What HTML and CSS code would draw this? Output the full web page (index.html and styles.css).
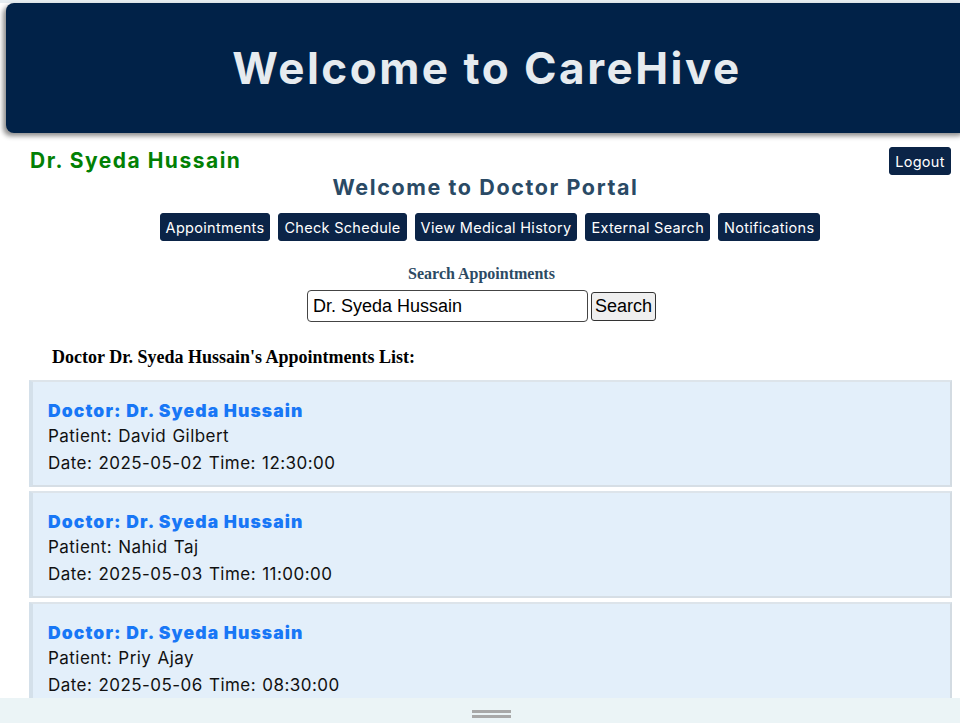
FILE: index.html
```html
<!DOCTYPE html>
<html lang="en">
<head>
<meta charset="utf-8">
<title>CareHive - Doctor Portal</title>
<link rel="stylesheet" href="styles.css">
</head>
<body>
<div class="page">
  <header class="hero">
    <h1 class="hero-title">Welcome to CareHive</h1>
  </header>

  <div class="topline">
    <h2 class="doc-name">Dr. Syeda Hussain</h2>
    <button class="btn logout">Logout</button>
  </div>

  <h2 class="portal-title">Welcome to Doctor Portal</h2>

  <nav class="nav">
    <button class="btn">Appointments</button>
    <button class="btn">Check Schedule</button>
    <button class="btn">View Medical History</button>
    <button class="btn">External Search</button>
    <button class="btn">Notifications</button>
  </nav>

  <section class="search">
    <h3 class="search-title">Search Appointments</h3>
    <form class="search-form">
      <input class="search-input" type="text" value="Dr. Syeda Hussain">
      <button class="search-btn" type="button">Search</button>
    </form>
  </section>

  <h3 class="list-title">Doctor Dr. Syeda Hussain's Appointments List:</h3>

  <div class="list">
    <div class="card">
      <div class="card-doc">Doctor: Dr. Syeda Hussain</div>
      <div class="card-line">Patient: David Gilbert</div>
      <div class="card-line">Date: 2025-05-02 Time: 12:30:00</div>
    </div>
    <div class="card">
      <div class="card-doc">Doctor: Dr. Syeda Hussain</div>
      <div class="card-line">Patient: Nahid Taj</div>
      <div class="card-line">Date: 2025-05-03 Time: 11:00:00</div>
    </div>
    <div class="card">
      <div class="card-doc">Doctor: Dr. Syeda Hussain</div>
      <div class="card-line">Patient: Priy Ajay</div>
      <div class="card-line">Date: 2025-05-06 Time: 08:30:00</div>
    </div>
  </div>
</div>

<div class="dock">
  <span class="handle"></span>
</div>
</body>
</html>
```

FILE: styles.css
```css
html, body {
  margin: 0;
  padding: 0;
  background: #ffffff;
  overflow: hidden;
}

body {
  font-family: "Inter", "Open Sans", sans-serif;
  color: #000;
}

.page {
  border-top: 3px solid #e6edf1;
  width: 980px;
}

.hero {
  margin-left: 6px;
  width: 962px;
  height: 130px;
  background: #012248;
  border-radius: 8px;
  box-shadow: -3px 3px 5px rgba(0, 0, 0, 0.45);
  display: flex;
  align-items: center;
  justify-content: center;
}

.hero-title {
  margin: 0;
  color: #e6ebef;
  font-family: "Inter", sans-serif;
  font-weight: 700;
  font-size: 44px;
  letter-spacing: 2.5px;
}

.topline {
  display: flex;
  justify-content: space-between;
  align-items: flex-start;
  padding: 14px 0 0 30px;
  width: 921px;
  height: 26px;
}

.doc-name {
  margin: 2px 0 0 0;
  color: #028004;
  font-size: 21px;
  font-weight: 700;
  line-height: 24px;
  letter-spacing: 1.5px;
}

.btn {
  background: #0b2447;
  color: #ffffff;
  border: 1px solid #0b2447;
  border-radius: 3px;
  font-family: "Inter", sans-serif;
  font-size: 14.5px;
  letter-spacing: 0.3px;
  height: 28px;
  padding: 0 5px;
  cursor: pointer;
}

.logout {
  width: 62px;
  padding: 0;
  letter-spacing: 0.3px;
}

.portal-title {
  margin: 0;
  padding-top: 2px;
  width: 971px;
  text-align: center;
  color: #2a4a65;
  font-size: 21.5px;
  font-weight: 700;
  line-height: 24px;
  letter-spacing: 1.6px;
}

.nav {
  display: flex;
  justify-content: center;
  gap: 8px;
  padding-top: 14px;
  width: 980px;
}

.search {
  width: 963px;
  text-align: center;
  padding-top: 24px;
}

.search-title {
  margin: 0;
  font-family: "Liberation Serif", serif;
  font-size: 16px;
  font-weight: 700;
  color: #2c4a63;
  line-height: 18px;
}

.search-form {
  margin: 0;
  padding-top: 7px;
  display: flex;
  justify-content: center;
  align-items: center;
  gap: 3px;
}

.search-input {
  box-sizing: border-box;
  width: 281px;
  height: 32px;
  border: 1px solid #444;
  border-radius: 4px;
  padding: 0 5px;
  font-family: "Liberation Sans", Arial, sans-serif;
  font-size: 18px;
  color: #000;
}

.search-btn {
  box-sizing: border-box;
  height: 29px;
  padding: 0 3px;
  font-family: "Liberation Sans", Arial, sans-serif;
  font-size: 18px;
  background: #efefef;
  border: 1px solid #333;
  border-radius: 3px;
  color: #000;
}

.list-title {
  margin: 0;
  padding: 25px 0 0 52px;
  font-family: "Liberation Serif", serif;
  font-size: 18px;
  font-weight: 700;
  line-height: 20px;
}

.list {
  margin: 13px 0 0 29px;
  display: flex;
  flex-direction: column;
  gap: 4px;
}

.card {
  box-sizing: border-box;
  width: 923px;
  height: 107px;
  background: #e3effa;
  border-left: 4px solid #d4e0ea;
  border-top: 2px solid #dde4ea;
  border-right: 2px solid #d3dbe2;
  border-bottom: 2px solid #d6dee5;
  padding: 17px 0 0 15px;
}

.card-doc {
  color: #1877f6;
  font-weight: 900;
  font-size: 17.5px;
  line-height: 24px;
  letter-spacing: 1.1px;
}

.card-line {
  font-size: 17px;
  line-height: 27px;
  letter-spacing: 0.45px;
  word-spacing: 1px;
  color: #111;
}

.dock {
  position: fixed;
  left: 0;
  right: 0;
  bottom: 0;
  height: 25px;
  background: #ebf4f6;
  display: flex;
  justify-content: center;
}

.handle {
  margin-top: 12px;
  margin-left: 22px;
  width: 39px;
  height: 8px;
  border-top: 3px solid #a8a8a8;
  border-bottom: 3px solid #a8a8a8;
  box-sizing: border-box;
}
```
